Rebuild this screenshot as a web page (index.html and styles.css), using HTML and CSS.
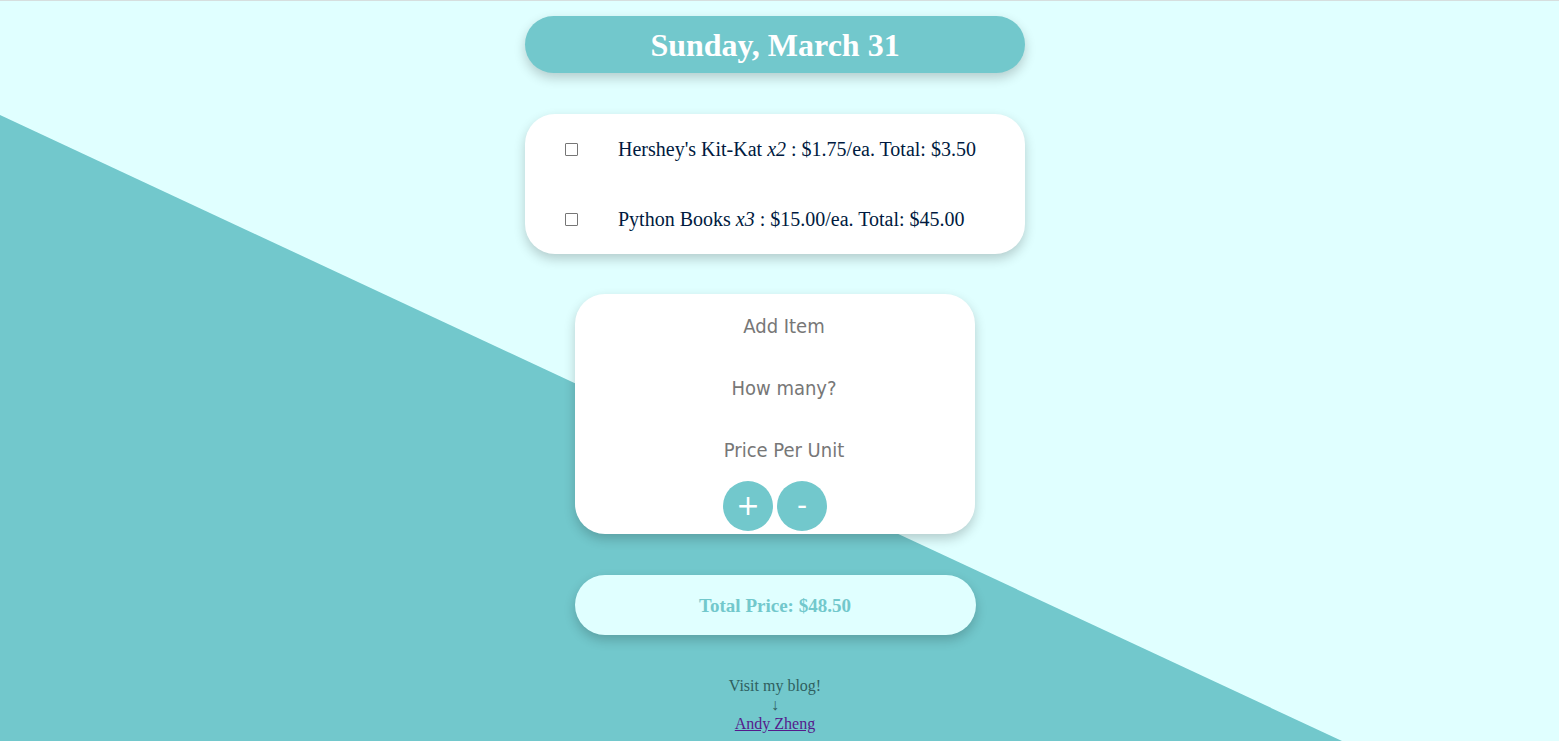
FILE: index.html
```html
<!DOCTYPE html>
<html>
<head>
<meta charset="utf-8">
<link rel="stylesheet" href="styles.css">
</head>
<body>
<div class="backdrop"></div>
<main class="page">
  <h1 class="date-pill">Sunday, March 31</h1>
  <ul class="list-card">
    <li class="item"><span class="box"></span><span class="item-text">Hershey's Kit-Kat <i>x2</i> : $1.75/ea. Total: $3.50</span></li>
    <li class="item"><span class="box"></span><span class="item-text">Python Books <i>x3</i> : $15.00/ea. Total: $45.00</span></li>
  </ul>
  <form class="add-card">
    <input class="field" type="text" placeholder="Add Item">
    <input class="field" type="text" placeholder="How many?">
    <input class="field" type="text" placeholder="Price Per Unit">
    <div class="buttons">
      <button type="button" class="round">+</button>
      <button type="button" class="round">-</button>
    </div>
  </form>
  <div class="total-pill">Total Price: $48.50</div>
  <footer class="footer">
    <div>Visit my blog!</div>
    <div class="arrow">&#8595;</div>
    <a class="blog-link" href="#">Andy Zheng</a>
  </footer>
</main>
</body>
</html>
```
FILE: styles.css
```css
html, body {
  margin: 0;
  padding: 0;
}
body {
  background: #e0ffff;
  border-top: 1px solid #d6dede;
  height: 740px;
  overflow: hidden;
  font-family: "Liberation Serif", serif;
  position: relative;
}
.backdrop {
  position: absolute;
  left: 0;
  top: -1px;
  width: 100%;
  height: 741px;
  background: #72c8cc;
  clip-path: polygon(0 115px, 1342px 741px, 0 741px);
  z-index: 0;
}
.page {
  position: relative;
  z-index: 1;
  display: flex;
  flex-direction: column;
  align-items: center;
  padding-top: 15px;
  padding-right: 9px;
}
.date-pill {
  margin: 0;
  width: 500px;
  height: 57px;
  box-sizing: border-box;
  background: #72c8cc;
  color: #fff;
  border-radius: 30px;
  font-size: 32px;
  font-weight: bold;
  text-align: center;
  line-height: 59px;
  box-shadow: 0 5px 12px rgba(0, 0, 0, 0.2);
}
.list-card {
  list-style: none;
  margin: 41px 0 0;
  padding: 0;
  width: 500px;
  background: #fff;
  border-radius: 30px;
  box-shadow: 0 5px 12px rgba(0, 0, 0, 0.2);
}
.item {
  height: 70px;
  display: flex;
  align-items: center;
  padding-left: 40px;
  font-size: 20px;
  color: #001a40;
}
.box {
  width: 11px;
  height: 11px;
  border: 1px solid #767676;
  border-radius: 1px;
  margin-right: 40px;
  margin-top: 1px;
}
.add-card {
  margin-top: 40px;
  width: 400px;
  height: 240px;
  box-sizing: border-box;
  background: #fff;
  border-radius: 30px;
  box-shadow: 0 5px 12px rgba(0, 0, 0, 0.2);
  display: flex;
  flex-direction: column;
  align-items: center;
  padding-top: 1px;
}
.field {
  width: 300px;
  height: 62px;
  border: none;
  outline: none;
  background: transparent;
  text-align: center;
  font-family: "DejaVu Sans Condensed", "DejaVu Sans", sans-serif;
  font-size: 20px;
  color: #333;
  padding: 0 0 0 18px;
}
.field::placeholder {
  color: #777;
}
.buttons {
  display: flex;
  gap: 4px;
}
.round {
  width: 50px;
  height: 50px;
  border-radius: 50%;
  border: none;
  background: #72c8cc;
  color: #fff;
  font-family: "DejaVu Sans", sans-serif;
  font-size: 28px;
  line-height: 50px;
  padding: 0;
}
.total-pill {
  margin-top: 41px;
  width: 401px;
  height: 60px;
  background: #e0ffff;
  border-radius: 30px;
  box-shadow: 0 5px 12px rgba(0, 0, 0, 0.2);
  color: #72c8cc;
  font-weight: bold;
  font-size: 19px;
  text-align: center;
  line-height: 62px;
}
.footer {
  margin-top: 41px;
  text-align: center;
  font-size: 16px;
  line-height: 19px;
  color: #2f5f5f;
}
.arrow {
  font-size: 16px;
  line-height: 19px;
}
.blog-link {
  color: #551a8b;
}
```
